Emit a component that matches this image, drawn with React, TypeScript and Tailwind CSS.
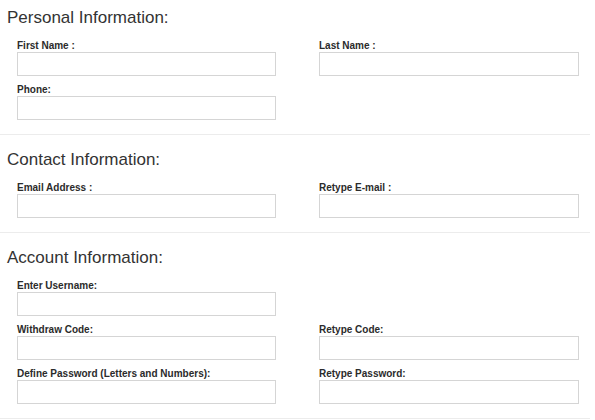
import type { ReactNode } from 'react';

interface Field {
  label: string;
  type?: string;
}

interface Section {
  title: string;
  rows: (Field | null)[][];
}

const sections: Section[] = [
  {
    title: 'Personal Information:',
    rows: [
      [{ label: 'First Name :' }, { label: 'Last Name :' }],
      [{ label: 'Phone:', type: 'tel' }, null],
    ],
  },
  {
    title: 'Contact Information:',
    rows: [[{ label: 'Email Address :', type: 'email' }, { label: 'Retype E-mail :', type: 'email' }]],
  },
  {
    title: 'Account Information:',
    rows: [
      [{ label: 'Enter Username:' }, null],
      [{ label: 'Withdraw Code:' }, { label: 'Retype Code:' }],
      [
        { label: 'Define Password (Letters and Numbers):', type: 'password' },
        { label: 'Retype Password:', type: 'password' },
      ],
    ],
  },
];

function FormField({ field }: { field: Field | null }) {
  if (!field) return <div />;
  return (
    <label className="flex flex-col">
      <span className="text-[10px] leading-[12px] font-bold text-[#2b2b2b]">{field.label}</span>
      <input
        type={field.type ?? 'text'}
        className="h-[24px] w-full border border-[#d5d5d5] bg-white px-2 text-[12px] outline-none"
      />
    </label>
  );
}

function FormSection({ section, first, children }: { section: Section; first: boolean; children?: ReactNode }) {
  return (
    <div className={`border-b border-[#ececec] pb-[14px] ${first ? 'pt-[8px]' : 'pt-[15px]'}`}>
      <h2 className="pl-[7px] text-[17px] leading-[20px] font-normal text-[#333333]">{section.title}</h2>
      <div className="mt-[12px] grid grid-cols-[259px_260px] gap-x-[43px] gap-y-[8px] pl-[17px]">
        {section.rows.map((row, i) =>
          row.map((field, j) => <FormField key={`${i}-${j}`} field={field} />)
        )}
      </div>
      {children}
    </div>
  );
}

export default function App() {
  return (
    <div className="min-h-[420px] w-[595px] bg-white font-['Liberation_Sans',Arial,sans-serif]">
      <div className="w-[590px]">
        {sections.map((section, i) => (
          <FormSection key={section.title} section={section} first={i === 0} />
        ))}
      </div>
    </div>
  );
}
